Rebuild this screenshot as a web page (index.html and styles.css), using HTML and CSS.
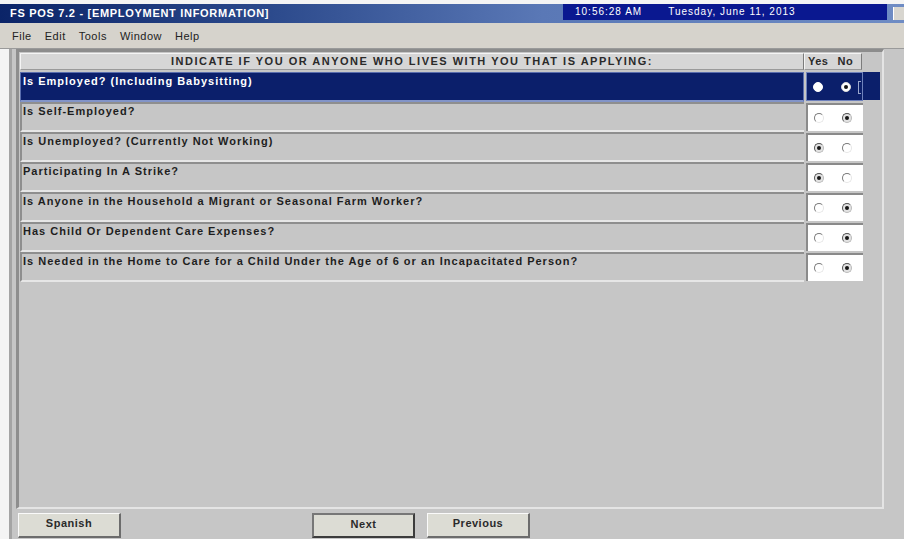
FILE: index.html
```html
<!DOCTYPE html>
<html lang="en">
<head>
<meta charset="utf-8">
<title>FS POS 7.2 - [EMPLOYMENT INFORMATION]</title>
<link rel="stylesheet" href="styles.css">
</head>
<body>
<div class="titlebar">
  <span class="title">FS POS 7.2 - [EMPLOYMENT INFORMATION]</span>
  <div class="clock"><span class="time">10:56:28 AM</span><span class="date">Tuesday, June 11, 2013</span></div>
  <span class="winbtn"></span>
</div>
<div class="menubar">
  <span>File</span><span>Edit</span><span>Tools</span><span>Window</span><span>Help</span>
</div>
<div class="main">
  <div class="strip"></div>
  <div class="frame">
    <div class="panel">
      <div class="head">
        <div class="head-q">INDICATE IF YOU OR ANYONE WHO LIVES WITH YOU THAT IS APPLYING:</div>
        <div class="head-yn"><span>Yes</span><span>No</span></div>
      </div>

      <div class="row selected">
        <div class="q">Is Employed? (Including Babysitting)</div>
        <div class="yn"><span class="radio solid"></span><span class="radio on"></span><span class="focus"></span></div>
        <div class="tail"></div>
      </div>
      <div class="row">
        <div class="q">Is Self-Employed?</div>
        <div class="yn"><span class="radio"></span><span class="radio on"></span></div>
        <div class="tail"></div>
      </div>
      <div class="row">
        <div class="q">Is Unemployed? (Currently Not Working)</div>
        <div class="yn"><span class="radio on"></span><span class="radio"></span></div>
        <div class="tail"></div>
      </div>
      <div class="row">
        <div class="q">Participating In A Strike?</div>
        <div class="yn"><span class="radio on"></span><span class="radio"></span></div>
        <div class="tail"></div>
      </div>
      <div class="row">
        <div class="q">Is Anyone in the Household a Migrant or Seasonal Farm Worker?</div>
        <div class="yn"><span class="radio"></span><span class="radio on"></span></div>
        <div class="tail"></div>
      </div>
      <div class="row">
        <div class="q">Has Child Or Dependent Care Expenses?</div>
        <div class="yn"><span class="radio"></span><span class="radio on"></span></div>
        <div class="tail"></div>
      </div>
      <div class="row">
        <div class="q">Is Needed in the Home to Care for a Child Under the Age of 6 or an Incapacitated Person?</div>
        <div class="yn"><span class="radio"></span><span class="radio on"></span></div>
        <div class="tail"></div>
      </div>
    </div>
    <div class="buttons">
      <button class="btn spanish">Spanish</button>
      <button class="btn next default">Next</button>
      <button class="btn prev">Previous</button>
    </div>
  </div>
</div>
</body>
</html>
```
FILE: styles.css
```css
* { box-sizing: border-box; }

html, body {
  margin: 0;
  padding: 0;
  width: 904px;
  height: 539px;
  overflow: hidden;
  background: #f4f4f4;
  font-family: "Liberation Sans", Arial, sans-serif;
}

/* caption bar */
.titlebar {
  margin-top: 4px;
  height: 19px;
  display: flex;
  align-items: flex-start;
  background: linear-gradient(to right, #0b2468 0%, #2c4a8c 30%, #5a78b6 60%, #6f8cc4 100%);
}
.title {
  color: #fff;
  font-weight: bold;
  font-size: 11px;
  letter-spacing: 0.7px;
  line-height: 19px;
  padding-left: 10px;
  width: 563px;
  white-space: nowrap;
}
.clock {
  width: 324px;
  height: 16px;
  background: #0a1890;
  color: #fff;
  font-size: 10px;
  line-height: 16px;
  display: flex;
  padding-left: 12px;
  letter-spacing: 1px;
  white-space: nowrap;
}
.clock .date { margin-left: 26px; }
.winbtn {
  margin: 3px 0 0 6px;
  width: 11px;
  height: 13px;
  background: #d8d6d0;
  border-left: 1px solid #fff;
}

/* menu */
.menubar {
  height: 26px;
  background: #d6d3cc;
  border-bottom: 1px solid #9a9a9a;
  display: flex;
  align-items: center;
  gap: 13px;
  padding-left: 12px;
  font-size: 11px;
  letter-spacing: 0.5px;
  color: #222;
}

/* window body */
.main {
  display: flex;
  height: 490px;
}
.strip {
  width: 9px;
  background: #f4f4f4;
}
.frame {
  flex: 1;
  background: #c6c6c6;
  border-left: 3px solid #a4a4a4;
  display: flex;
  flex-direction: column;
}
.panel {
  margin-left: 4px;
  width: 868px;
  height: 460px;
  border-top: 3px solid #8c8c8c;
  border-left: 3px solid #8e8e8e;
  border-right: 2px solid #e4e4e4;
  border-bottom: 2px solid #e4e4e4;
  padding: 1px 0 0 1px;
  background: #c6c6c6;
}

.head {
  display: flex;
  height: 17px;
  margin-bottom: 2px;
}
.head-q, .head-yn {
  background: #d6d6d6;
  border-top: 1px solid #f4f4f4;
  border-left: 1px solid #f4f4f4;
  border-right: 1px solid #7c7c7c;
  border-bottom: 1px solid #9a9a9a;
  font-weight: bold;
  font-size: 11px;
  line-height: 15px;
  color: #2a2a2a;
  letter-spacing: 0.5px;
  white-space: nowrap;
}
.head-q {
  width: 784px;
  text-align: center;
  letter-spacing: 1.5px;
}
.head-yn {
  width: 58px;
  display: flex;
  gap: 9px;
  padding-left: 3px;
}

/* question rows */
.row {
  display: flex;
  height: 30px;
}
.q {
  width: 784px;
  background: #c6c6c6;
  border-top: 2px solid #8e8e8e;
  border-left: 2px solid #8e8e8e;
  border-bottom: 2px solid #e6e6e6;
  font-weight: bold;
  font-size: 11px;
  letter-spacing: 1px;
  line-height: 12px;
  padding: 1px 0 0 1px;
  color: #1e1e1e;
  white-space: nowrap;
}
.yn {
  margin: 1px 0 1px 2px;
  width: 57px;
  background: #fff;
  border-top: 2px solid #8a8a8a;
  border-left: 2px solid #8a8a8a;
  display: flex;
  align-items: center;
  padding-left: 6px;
  gap: 18px;
}
.tail { width: 17px; }

.radio {
  position: relative;
  width: 10px;
  height: 10px;
  border-radius: 50%;
  border: 1px solid;
  border-color: #7a7a7a #e6e6e6 #e6e6e6 #7a7a7a;
  background: #fff;
}
.radio.on {
  background: #e2e2e2;
  border-color: #555 #bbb #bbb #555;
}
.radio.on::after {
  content: "";
  position: absolute;
  left: 2px;
  top: 2px;
  width: 4px;
  height: 4px;
  border-radius: 50%;
  background: #151515;
}

/* highlighted row */
.row.selected .q {
  background: #0b1f6b;
  color: #fff;
  border: 1px solid #5a6eae;
  border-bottom: 2px solid #8294c8;
  padding: 2px 0 0 2px;
}
.row.selected .yn {
  background: #0b1f6b;
  border: 1px solid #6f82bc;
  margin-top: 0;
  position: relative;
}
.row.selected .tail {
  background: #0b1f6b;
  height: 28px;
}
.radio.solid {
  background: #fff;
  border-color: #fff;
}
.row.selected .radio.on {
  background: #fff;
  border-color: #dcdcdc;
}
.focus {
  position: absolute;
  right: 1px;
  top: 8px;
  width: 3px;
  height: 13px;
  border: 1px solid #9aa6cc;
  border-right: none;
}

/* command buttons */
.buttons {
  display: flex;
  padding: 4px 0 0 6px;
}
.btn {
  width: 103px;
  height: 25px;
  background: #dcdcd4;
  border: 1px solid;
  border-color: #fafafa #6c6c6c #6c6c6c #fafafa;
  border-right-width: 2px;
  border-bottom-width: 2px;
  font-family: "Liberation Sans", Arial, sans-serif;
  font-weight: bold;
  font-size: 11px;
  letter-spacing: 0.5px;
  color: #2a2a2a;
  padding: 0 0 4px 0;
  margin: 0;
}
.btn.next { margin-left: 191px; }
.btn.prev { margin-left: 12px; }
.btn.default {
  border: 2px solid #3c3c3c;
  border-top-color: #777;
  border-left-color: #777;
}
```
